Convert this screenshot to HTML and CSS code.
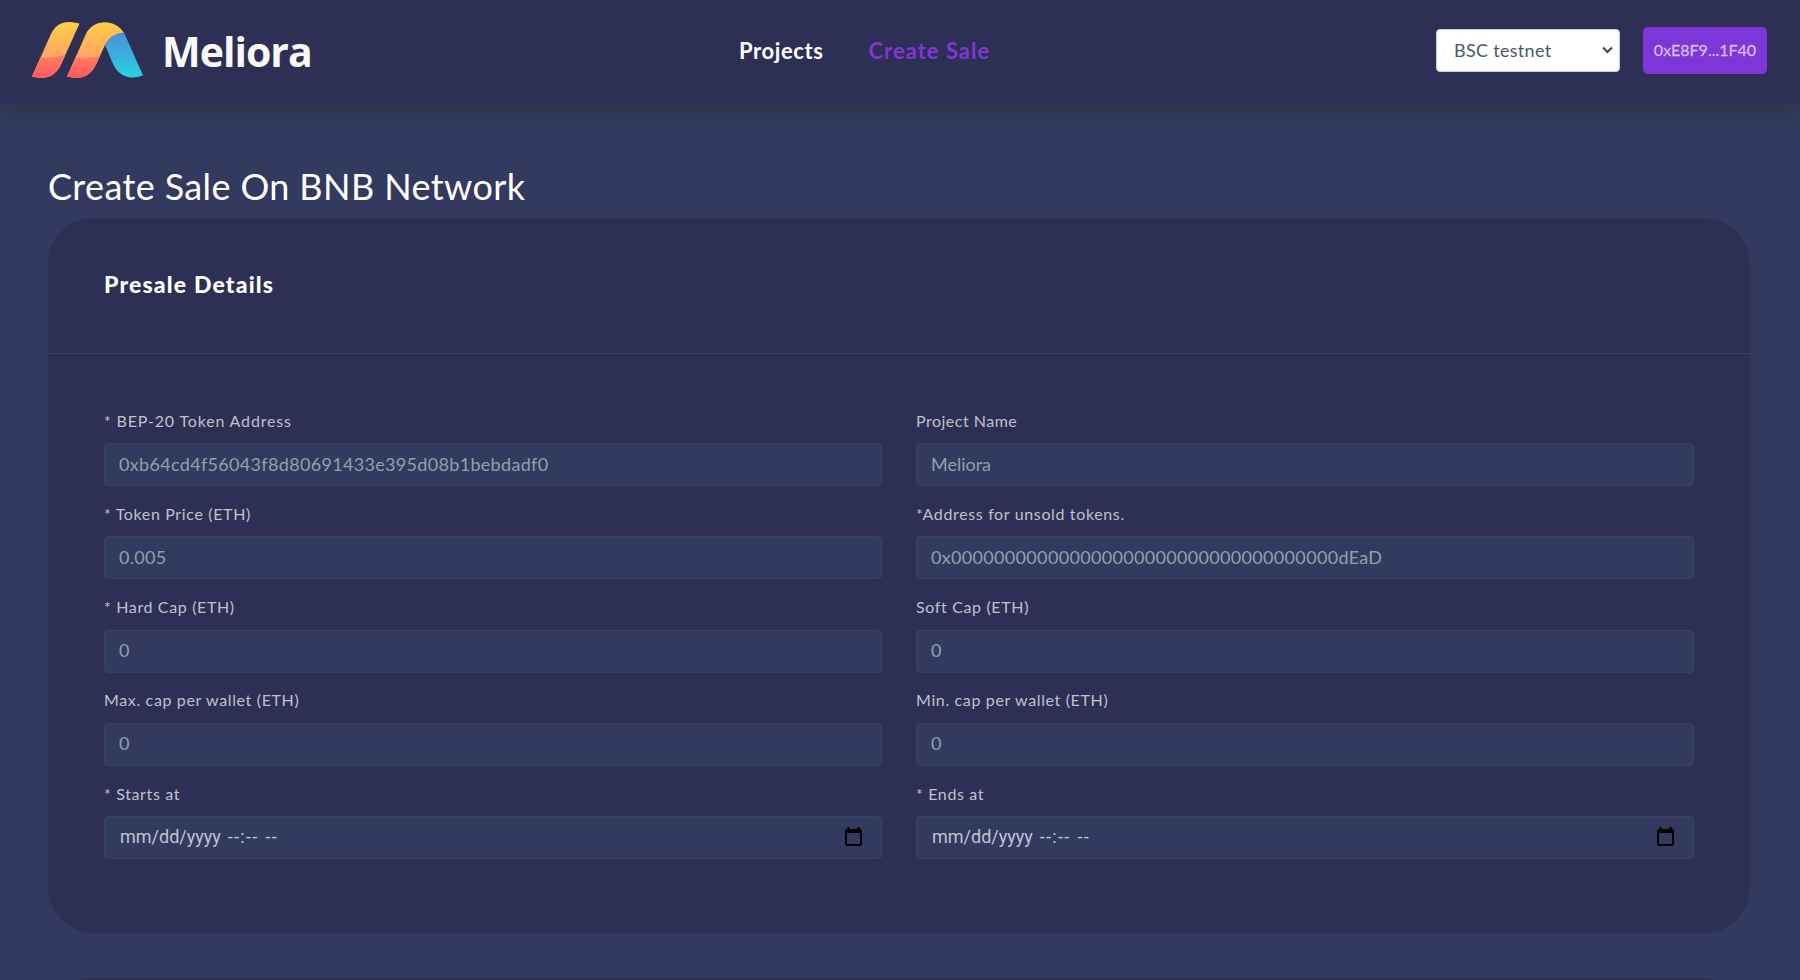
FILE: index.html
```html
<!DOCTYPE html>
<html lang="en">
<head>
<meta charset="utf-8">
<title>Meliora</title>
<link rel="stylesheet" href="styles.css">
</head>
<body>
<header class="topbar">
  <a class="brand">
    <svg class="brand-mark" width="112" height="58" viewBox="0 0 112 58">
      <defs>
        <linearGradient id="gold" x1="0" y1="0" x2="0" y2="1"><stop offset="0" stop-color="#ffcf45"/><stop offset=".65" stop-color="#ffa263"/><stop offset="1" stop-color="#ff9a68"/></linearGradient>
        <linearGradient id="red" x1="0" y1="0" x2="0" y2="1"><stop offset="0" stop-color="#ff8060"/><stop offset="1" stop-color="#ff575f"/></linearGradient>
        <linearGradient id="blue" x1="0" y1="0" x2="0" y2="1"><stop offset="0" stop-color="#4a8fdc"/><stop offset="1" stop-color="#28d2dc"/></linearGradient>
        <clipPath id="bars"><path d="M0 55.500 L18.500 14 Q26 -3.500 47.500 2.500 L29.500 42.500 Q21 61.500 0 55.500Z"/><path d="M35 55.500 L53.500 14 C60 -2 83 -3 92 12 Q79 13 73 24 L64.500 42.500 Q56 61.500 35 55.500Z"/></clipPath>
      </defs>
      <g clip-path="url(#bars)">
        <rect width="112" height="58" fill="url(#gold)"/>
        <path d="M0 35 Q18 39 32 34 Q52 40 72 34 V58 H0Z" fill="url(#red)"/>
      </g>
      <path d="M73 24 Q79 12 92 11.500 L111 54.500 Q90 61.500 81 43Z" fill="url(#blue)"/>
    </svg>
    <span class="brand-name">Meliora</span>
  </a>
  <nav class="nav">
    <a class="nav-link">Projects</a>
    <a class="nav-link nav-active">Create Sale</a>
  </nav>
  <div class="account">
    <div class="network">BSC testnet
      <svg width="11" height="8" viewBox="0 0 11 8" fill="none" stroke="#3d4554" stroke-width="2"><path d="M1 1.500 L5.500 6 L10 1.500"/></svg>
    </div>
    <button class="wallet">0xE8F9...1F40</button>
  </div>
</header>
<main class="page">
  <h1 class="title">Create Sale On BNB Network</h1>
  <section class="card">
    <h2 class="card-head">Presale Details</h2>
    <form class="fields">
      <label class="field"><span class="label label-wide">* BEP-20 Token Address</span><input class="input" placeholder="0xb64cd4f56043f8d80691433e395d08b1bebdadf0"></label>
      <label class="field"><span class="label label-tight">Project Name</span><input class="input input-plain" placeholder="Meliora"></label>
      <label class="field"><span class="label">* Token Price (ETH)</span><input class="input" placeholder="0.005"></label>
      <label class="field"><span class="label">*Address for unsold tokens.</span><input class="input" placeholder="0x000000000000000000000000000000000000dEaD"></label>
      <label class="field"><span class="label">* Hard Cap (ETH)</span><input class="input" placeholder="0"></label>
      <label class="field"><span class="label">Soft Cap (ETH)</span><input class="input" placeholder="0"></label>
      <label class="field"><span class="label">Max. cap per wallet (ETH)</span><input class="input" placeholder="0"></label>
      <label class="field"><span class="label">Min. cap per wallet (ETH)</span><input class="input" placeholder="0"></label>
      <div class="field"><span class="label">* Starts at</span>
        <div class="input date"><span>mm/dd/yyyy</span><span class="time">--:--</span><span class="time">--</span>
          <svg class="calendar" width="17" height="19" viewBox="0 0 17 19"><path d="M2.500 0h2v2h8V0h2v2H15q2 0 2 2v13q0 2-2 2H2q-2 0-2-2V4q0-2 2-2h.5zM2 6v11h13V6z" fill="#000" fill-rule="evenodd"/></svg>
        </div></div>
      <div class="field"><span class="label">* Ends at</span>
        <div class="input date"><span>mm/dd/yyyy</span><span class="time">--:--</span><span class="time">--</span>
          <svg class="calendar" width="17" height="19" viewBox="0 0 17 19"><path d="M2.500 0h2v2h8V0h2v2H15q2 0 2 2v13q0 2-2 2H2q-2 0-2-2V4q0-2 2-2h.5zM2 6v11h13V6z" fill="#000" fill-rule="evenodd"/></svg>
        </div></div>
    </form>
  </section>
  <section class="card card-next"></section>
</main>
</body>
</html>
```
FILE: styles.css
```css
* { box-sizing: border-box; }
body { margin: 0; height: 980px; overflow: hidden; background: #323a60; color: #fff; font-family: Lato, sans-serif; }
.topbar { position: relative; height: 104px; padding: 0 33px 0 32px; display: grid; grid-template-columns: 707px auto 1fr; align-items: center; background: #2d2f54; box-shadow: 0 8px 16px -4px rgba(45, 52, 54, .8); }
.brand { display: flex; align-items: center; gap: 18px; }
.brand-mark { display: block; margin-top: -4px; }
.brand-name { margin-top: -3px; font: 700 41px/50px "Open Sans", sans-serif; letter-spacing: -1px; color: #faf8f8; }
.nav { display: flex; gap: 45px; font-size: 22px; font-weight: 700; margin-top: -4px; }
.nav-link { color: #fff; letter-spacing: .6px; }
.nav-active { color: #7e38d8; letter-spacing: 1px; }
.account { display: flex; justify-content: flex-end; align-items: center; gap: 23px; margin-top: -3px; }
.network { display: flex; align-items: center; justify-content: space-between; width: 184px; height: 43px; padding: 0 6px 2px 17px; border: 1px solid #c6cad8; border-radius: 4px; background: #fff; color: #4c566a; font-size: 18px; letter-spacing: .3px; }
.wallet { width: 124px; height: 47px; padding: 0 0 3px; border: 0; border-radius: 5px; background: #7e36d8; color: #d7bdf2; font: 400 16px Lato, sans-serif; -webkit-text-stroke: .3px #d7bdf2; }
.page { height: 876px; overflow: hidden; padding: 57px 50px 0 48px; }
.title { margin: 0; height: 57px; font-size: 36px; line-height: 50px; font-weight: 400; letter-spacing: .38px; }
.card { height: 715px; border-radius: 46px; background: #2d2f54; }
.card-head { margin: 0; height: 136px; padding: 50px 56px 0; border-bottom: 1px solid #384459; font-size: 23px; line-height: 32px; font-weight: 900; letter-spacing: 1.17px; }
.fields { padding: 56px 56px 0; display: grid; grid-template-columns: 1fr 1fr; column-gap: 34px; row-gap: 17.3px; }
.field { display: flex; flex-direction: column; height: 76px; justify-content: space-between; }
.label { margin-top: -.5px; font-size: 16px; line-height: 22px; color: #c0c1cd; letter-spacing: .64px; }
.label-wide { letter-spacing: .84px; }
.label-tight { letter-spacing: .5px; }
.input { width: 100%; height: 43px; padding: 0 14px 2px; border: 1px solid #38445a; border-radius: 4px; background: #323a60; color: #c0c4d0; font: 400 18px Lato, sans-serif; letter-spacing: .32px; }
.input-plain { letter-spacing: 0; }
.input::placeholder { color: #91a0ad; opacity: 1; }
.date { display: flex; align-items: center; gap: 7px; padding: 0 19px 2px 15px; font-family: Roboto, sans-serif; letter-spacing: 0; }
.time { letter-spacing: 1.3px; }
.calendar { margin-left: auto; }
.card-next { margin-top: 45px; height: 200px; }
```
